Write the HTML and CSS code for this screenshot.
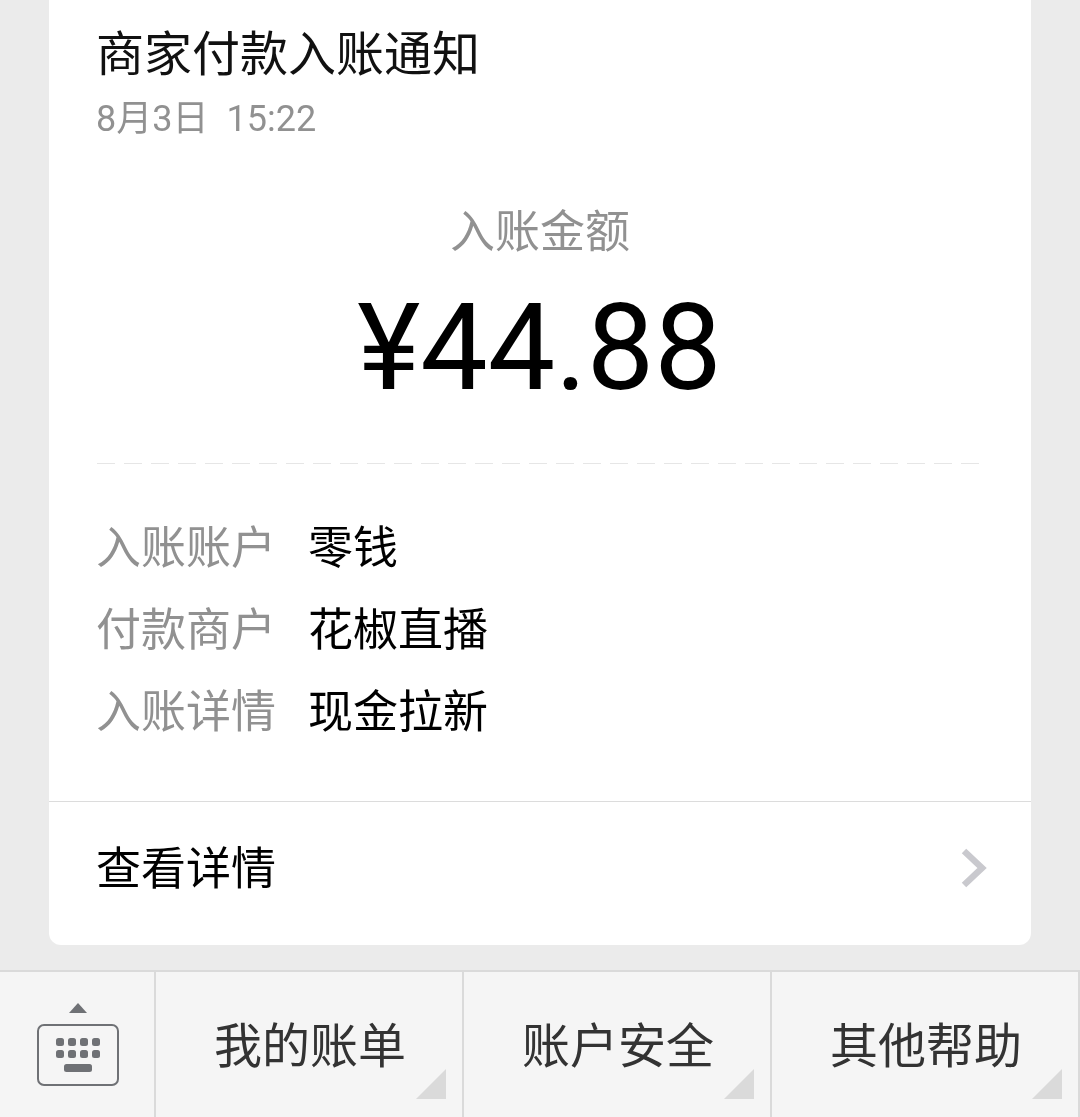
FILE: index.html
```html
<!DOCTYPE html>
<html lang="zh-CN">
<head>
    <meta charset="UTF-8">
    <title>商家付款入账通知</title>
    <link rel="stylesheet" href="styles.css">
</head>
<body>
    <div class="chat">
        <div class="card">
            <div class="card-body">
                <h1 class="title">商家付款入账通知</h1>
                <p class="date"><span class="date-day">8月3日</span><span>15:22</span></p>
                <p class="amount-label">入账金额</p>
                <p class="amount">¥44.88</p>
                <div class="dashed"></div>
                <div class="rows">
                    <div class="row"><span class="row-label">入账账户</span><span>零钱</span></div>
                    <div class="row"><span class="row-label">付款商户</span><span>花椒直播</span></div>
                    <div class="row"><span class="row-label">入账详情</span><span>现金拉新</span></div>
                </div>
            </div>
            <div class="more">
                <span class="more-text">查看详情</span>
                <svg class="chevron" width="28" height="40" viewBox="0 0 28 40">
                    <path d="M3 3 L21 20 L3 37" fill="none" stroke="#c9c9ce" stroke-width="6.5"/>
                </svg>
            </div>
        </div>
    </div>
    <div class="menu">
        <div class="keyboard">
            <svg width="84" height="86" viewBox="0 0 84 86">
                <path d="M33 13 L42 3 L51 13 Z" fill="#6f7175"/>
                <rect x="2" y="25" width="80" height="60" rx="6" fill="none" stroke="#6f7175" stroke-width="2"/>
                <g fill="#6f7175">
                    <rect x="20" y="38" width="8" height="8" rx="2.5"/>
                    <rect x="32" y="38" width="8" height="8" rx="2.5"/>
                    <rect x="44" y="38" width="8" height="8" rx="2.5"/>
                    <rect x="56" y="38" width="8" height="8" rx="2.5"/>
                    <rect x="20" y="50" width="8" height="8" rx="2.5"/>
                    <rect x="32" y="50" width="8" height="8" rx="2.5"/>
                    <rect x="44" y="50" width="8" height="8" rx="2.5"/>
                    <rect x="56" y="50" width="8" height="8" rx="2.5"/>
                    <rect x="28" y="64" width="28" height="8" rx="2.5"/>
                </g>
            </svg>
        </div>
        <div class="menu-item">我的账单</div>
        <div class="menu-item">账户安全</div>
        <div class="menu-item">其他帮助</div>
    </div>
</body>
</html>
```

FILE: styles.css
```css
html, body {
    margin: 0;
    padding: 0;
}
body {
    width: 1080px;
    height: 1117px;
    overflow: hidden;
    background-color: #ebebeb;
    font-family: Roboto, "Noto Sans CJK SC", sans-serif;
    color: #000;
}
p, h1 {
    margin: 0;
    font-weight: normal;
}
.chat {
    height: 970px;
    padding: 0 49px;
    box-sizing: border-box;
}
.card {
    height: 945px;
    background: white;
    border-radius: 0 0 12px 12px;
}
.card-body {
    height: 801px;
    padding: 0 52px 0 48px;
    box-sizing: border-box;
    will-change: transform;
}
.title {
    padding-top: 22px;
    margin-left: -1px;
    font-size: 48px;
    line-height: 66px;
    color: #111;
}
.date {
    margin-top: 6px;
    margin-left: -1px;
    font-size: 36px;
    line-height: 50px;
    color: #919191;
}
.date-day {
    margin-right: 18px;
}
.amount-label {
    margin-top: 57px;
    padding-left: 4px;
    font-size: 45px;
    line-height: 64px;
    text-align: center;
    color: #919191;
}
.amount {
    margin-top: 18px;
    padding-left: 3px;
    font-size: 120px;
    line-height: 130px;
    text-align: center;
}
.dashed {
    height: 1px;
    margin-top: 50px;
    background: repeating-linear-gradient(to right, #e6e6e6 0 18px, transparent 18px 27px);
}
.rows {
    margin-top: 44px;
}
.row {
    display: flex;
    height: 82px;
    margin-left: -1px;
    font-size: 45px;
    line-height: 82px;
}
.row-label {
    width: 212px;
    color: #919191;
}
.more {
    display: flex;
    align-items: center;
    justify-content: space-between;
    height: 131px;
    padding: 0 42px 12px 48px;
    border-top: 1px solid #dcdcdc;
    font-size: 45px;
    will-change: transform;
}
.more-text {
    margin-left: -1px;
    margin-bottom: 4px;
}
.chevron {
    display: block;
}
.menu {
    display: flex;
    height: 145px;
    background-color: #f5f5f5;
    border-top: 2px solid #dadada;
}
.keyboard {
    display: flex;
    justify-content: center;
    width: 156px;
    padding-top: 28px;
    padding-left: 2px;
    box-sizing: border-box;
    border-right: 2px solid #dadada;
}
.menu-item {
    position: relative;
    width: 308px;
    padding-left: 2px;
    box-sizing: border-box;
    border-right: 2px solid #dadada;
    font-size: 48px;
    line-height: 150px;
    text-align: center;
    color: #333;
    will-change: transform;
}
.menu-item::after {
    content: "";
    position: absolute;
    right: 16px;
    bottom: 18px;
    border-style: solid;
    border-width: 0 0 30px 30px;
    border-color: transparent transparent #dadada transparent;
}
```
